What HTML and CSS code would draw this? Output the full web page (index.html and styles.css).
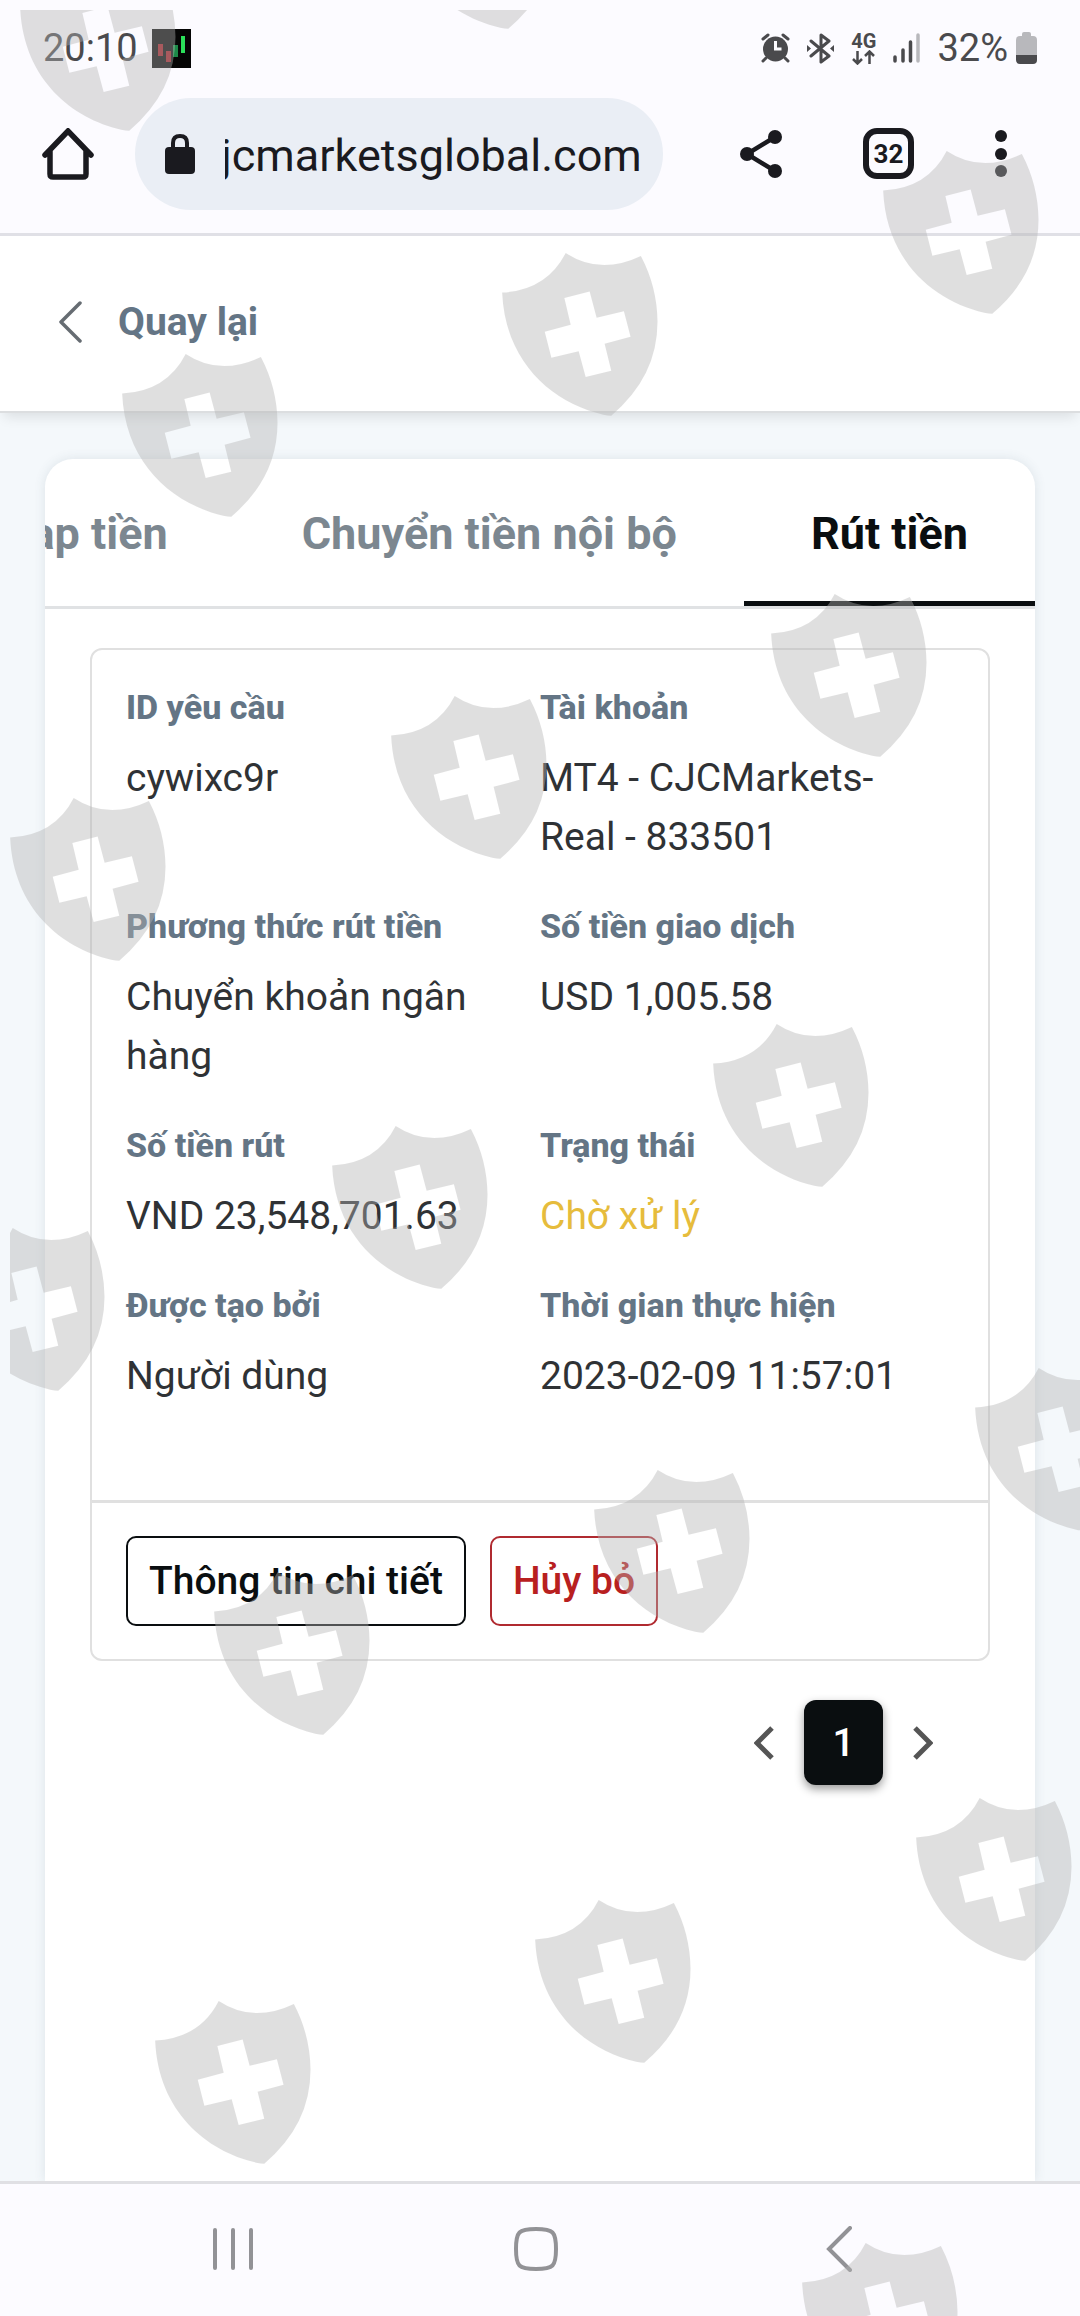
FILE: index.html
```html
<!DOCTYPE html>
<html lang="vi">
<head>
    <meta charset="UTF-8">
    <meta name="viewport" content="width=device-width, initial-scale=1.0">
    <title>Rút tiền</title>
    <link rel="stylesheet" href="styles.css">
</head>
<body>

    <div class="status-bar">
        <div class="status-left">
            <span>20:10</span>
            <svg width="39" height="39" viewBox="0 0 39 39">
                <rect width="39" height="39" fill="#050505"/>
                <path d="M6 15h5v12H6zM14 22h5v11h-5z" fill="#a01c22"/>
                <path d="M21 16h5v12h-5z" fill="#1c8a48"/>
                <path d="M29 7h4v17h-4z" fill="#2be05a"/>
            </svg>
        </div>
        <div class="status-right">
            <svg width="29" height="30" viewBox="0 0 29 30">
                <circle cx="14.500" cy="16" r="12.500" fill="#4a4a4d"/>
                <path d="M2 6l5-4M27 6l-5-4M5 25l-3 3M24 25l3 3" stroke="#4a4a4d" stroke-width="3" stroke-linecap="round"/>
                <path d="M14.500 8v8h6" fill="none" stroke="#fcfbff" stroke-width="3"/>
            </svg>
            <svg width="27" height="31" viewBox="0 0 27 31">
                <path d="M4 8l18 15-8 6V2l8 6L4 23" fill="none" stroke="#4a4a4d" stroke-width="3" stroke-linejoin="round" stroke-linecap="round"/>
                <path d="M0 12l4 3.500-4 3.500zM27 12l-4 3.500 4 3.500z" fill="#4a4a4d"/>
            </svg>
            <span class="network">
                4G
                <svg width="25" height="15" viewBox="0 0 25 15">
                    <path d="M6.500 1v12M2 9l4.500 4.500L11 9M18.500 14V2M14 6l4.500-4.500L23 6" fill="none" stroke="#4a4a4d" stroke-width="2.500"/>
                </svg>
            </span>
            <svg width="27" height="30" viewBox="0 0 27 30">
                <path d="M2 24v4M10 17v11M17.500 9v19" stroke="#4a4a4d" stroke-width="3.500" stroke-linecap="round"/>
                <path d="M25 2v26" stroke="#b8b8bc" stroke-width="3.500" stroke-linecap="round"/>
            </svg>
            <span class="battery">
                32%
                <svg width="21" height="32" viewBox="0 0 21 32">
                    <path d="M6 2q0-2 2-2h5q2 0 2 2v2h2q4 0 4 4v15H0V8q0-4 4-4h2z" fill="#b8b8bc"/>
                    <path d="M0 23h21v5q0 4-4 4H4q-4 0-4-4z" fill="#4a4a4d"/>
                </svg>
            </span>
        </div>
    </div>

    <div class="browser-bar">
        <button class="icon-btn" aria-label="Home">
            <svg width="52" height="52" viewBox="0 0 52 52">
                <path d="M3 27L26 3l23 24M8 22v24q0 3 3 3h30q3 0 3-3V22" fill="none" stroke="#1a1a1f" stroke-width="5.500" stroke-linecap="round"/>
            </svg>
        </button>
        <div class="address">
            <svg width="30" height="40" viewBox="0 0 30 40">
                <rect y="13" width="30" height="27" rx="4" fill="#1a1a1f"/>
                <path d="M8 14V9q0-7 7-7t7 7v5" fill="none" stroke="#1a1a1f" stroke-width="4"/>
            </svg>
            <input class="url" type="text" value="jcmarketsglobal.com" aria-label="URL">
        </div>
        <div class="browser-actions">
            <button class="icon-btn" aria-label="Share">
                <svg width="42" height="48" viewBox="0 0 42 48">
                    <path d="M35 7L7 24l28 17" fill="none" stroke="#1a1a1f" stroke-width="4.500"/>
                    <circle cx="35" cy="7" r="7" fill="#1a1a1f"/>
                    <circle cx="7" cy="24" r="7" fill="#1a1a1f"/>
                    <circle cx="35" cy="41" r="7" fill="#1a1a1f"/>
                </svg>
            </button>
            <button class="tab-count" aria-label="Tabs">32</button>
            <button class="icon-btn" aria-label="Menu">
                <svg width="12" height="48" viewBox="0 0 12 48">
                    <circle cx="6" cy="6" r="6" fill="#1a1a1f"/>
                    <circle cx="6" cy="24" r="6" fill="#1a1a1f"/>
                    <circle cx="6" cy="41" r="6" fill="#1a1a1f"/>
                </svg>
            </button>
        </div>
    </div>

    <header class="app-header">
        <a class="back" href="#">
            <svg width="24" height="44" viewBox="0 0 24 44">
                <path d="M22 3L3 22l19 19" fill="none" stroke="#666c72" stroke-width="3.500" stroke-linecap="round" stroke-linejoin="round"/>
            </svg>
            Quay lại
        </a>
    </header>

    <main class="page">
        <section class="panel">
            <nav class="tabs">
                <a class="tab" href="#">Nạp tiền</a>
                <a class="tab" href="#">Chuyển tiền nội bộ</a>
                <a class="tab active" href="#">Rút tiền</a>
            </nav>

            <article class="request">
                <dl class="fields">
                    <div class="field">
                        <dt>ID yêu cầu</dt>
                        <dd>cywixc9r</dd>
                    </div>
                    <div class="field">
                        <dt>Tài khoản</dt>
                        <dd>MT4 - CJCMarkets-Real - 833501</dd>
                    </div>
                    <div class="field">
                        <dt>Phương thức rút tiền</dt>
                        <dd>Chuyển khoản ngân hàng</dd>
                    </div>
                    <div class="field">
                        <dt>Số tiền giao dịch</dt>
                        <dd>USD 1,005.58</dd>
                    </div>
                    <div class="field">
                        <dt>Số tiền rút</dt>
                        <dd>VND 23,548,701.63</dd>
                    </div>
                    <div class="field">
                        <dt>Trạng thái</dt>
                        <dd class="pending">Chờ xử lý</dd>
                    </div>
                    <div class="field">
                        <dt>Được tạo bởi</dt>
                        <dd>Người dùng</dd>
                    </div>
                    <div class="field">
                        <dt>Thời gian thực hiện</dt>
                        <dd>2023-02-09 11:57:01</dd>
                    </div>
                </dl>
                <div class="request-actions">
                    <button class="btn">Thông tin chi tiết</button>
                    <button class="btn btn-danger">Hủy bỏ</button>
                </div>
            </article>

            <div class="pager">
                <button class="icon-btn" aria-label="Trang trước">
                    <svg width="20" height="34" viewBox="0 0 20 34">
                        <path d="M18 2L3 17l15 15" fill="none" stroke="#555" stroke-width="5"/>
                    </svg>
                </button>
                <button class="page-number">1</button>
                <button class="icon-btn" aria-label="Trang sau">
                    <svg width="20" height="34" viewBox="0 0 20 34">
                        <path d="M2 2l15 15L2 32" fill="none" stroke="#555" stroke-width="5"/>
                    </svg>
                </button>
            </div>
        </section>
    </main>

    <footer class="nav-bar">
        <button class="icon-btn" aria-label="Recents">
            <svg width="40" height="44" viewBox="0 0 40 44">
                <path d="M2 3v38M20 3v38M38 3v38" stroke="#929296" stroke-width="4" stroke-linecap="round"/>
            </svg>
        </button>
        <button class="icon-btn" aria-label="Home screen">
            <svg width="44" height="44" viewBox="0 0 44 44">
                <path d="M22 2q13 0 16.500 3.500T42 22t-3.500 16.500T22 42 5.500 38.500 2 22 5.500 5.500 22 2z" fill="none" stroke="#929296" stroke-width="4"/>
            </svg>
        </button>
        <button class="icon-btn" aria-label="Back">
            <svg width="26" height="46" viewBox="0 0 26 46">
                <path d="M24 2L3 23l21 21" fill="none" stroke="#929296" stroke-width="4" stroke-linecap="round"/>
            </svg>
        </button>
    </footer>

    <!-- shield watermark over the whole screen -->
    <svg class="watermark" aria-hidden="true">
        <defs>
            <symbol id="shield" viewBox="66 68 468 490">
                <path fill-rule="evenodd" d="M66 187Q200 180 257 68Q360 136 483 77Q532 170 533 275Q533 440 394 557Q384 557 370 554C220 520 75 400 66 187zM253 203L272 284 194 305 214 383 296 363 317 441 394 422 374 341 452 320 432 243 350 263 329 184z"/>
            </symbol>
        </defs>
        <use href="#shield" x="20" y="-32" width="156" height="163"/>
        <use href="#shield" x="399" y="-134" width="156" height="163"/>
        <use href="#shield" x="883" y="151" width="156" height="163"/>
        <use href="#shield" x="502" y="253" width="156" height="163"/>
        <use href="#shield" x="122" y="354" width="156" height="163"/>
        <use href="#shield" x="771" y="594" width="156" height="163"/>
        <use href="#shield" x="391" y="696" width="156" height="163"/>
        <use href="#shield" x="10" y="798" width="156" height="163"/>
        <use href="#shield" x="713" y="1024" width="156" height="163"/>
        <use href="#shield" x="332" y="1126" width="156" height="163"/>
        <use href="#shield" x="-51" y="1228" width="156" height="163"/>
        <use href="#shield" x="975" y="1368" width="156" height="163"/>
        <use href="#shield" x="594" y="1470" width="156" height="163"/>
        <use href="#shield" x="214" y="1572" width="156" height="163"/>
        <use href="#shield" x="916" y="1798" width="156" height="163"/>
        <use href="#shield" x="535" y="1900" width="156" height="163"/>
        <use href="#shield" x="155" y="2001" width="156" height="163"/>
        <use href="#shield" x="802" y="2243" width="156" height="163"/>
    </svg>

</body>
</html>
```

FILE: styles.css
```css
* {
    box-sizing: border-box;
}

body {
    position: relative;
    display: flex;
    flex-direction: column;
    min-height: 100vh;
    margin: 0;
    font-family: Roboto, sans-serif;
    font-size: 39px;
    color: #2f3235;
    background-color: #f4f8fb;
}

svg {
    display: block;
    flex-shrink: 0;
}

a {
    text-decoration: none;
}

button {
    font-family: inherit;
    cursor: pointer;
}

.icon-btn {
    padding: 0;
    border: none;
    background: none;
}

/* phone status bar */
.status-bar {
    display: flex;
    justify-content: space-between;
    align-items: center;
    height: 96px;
    padding: 0 43px;
    font-size: 38px;
    color: #4a4a4d;
    background-color: #fcfbff;
}

.status-left {
    display: flex;
    align-items: center;
    gap: 14px;
}

.status-right {
    display: flex;
    align-items: center;
    gap: 17px;
}

.network {
    display: flex;
    flex-direction: column;
    align-items: center;
    font-size: 20px;
    font-weight: 700;
    line-height: 18px;
}

.battery {
    display: flex;
    align-items: center;
    gap: 8px;
}

/* browser toolbar */
.browser-bar {
    display: flex;
    align-items: center;
    height: 140px;
    padding: 0 73px 22px 42px;
    background-color: #fcfbff;
    border-bottom: 3px solid #e0e0e6;
}

.address {
    display: flex;
    flex: 1;
    align-items: center;
    gap: 30px;
    min-width: 0;
    height: 112px;
    margin: 0 77px 0 41px;
    padding: 0 20px 0 30px;
    border-radius: 56px;
    background-color: #eaeef5;
}

.url {
    flex: 1;
    min-width: 0;
    padding: 4px 0 0;
    border: none;
    background: none;
    font-family: inherit;
    font-size: 45px;
    text-indent: -4px;
    color: #1a1a1f;
}

.browser-actions {
    display: flex;
    align-items: center;
    gap: 81px;
}

.tab-count {
    width: 51px;
    height: 51px;
    padding: 0;
    border: 6px solid #1a1a1f;
    border-radius: 14px;
    background: none;
    font-size: 26px;
    font-weight: 700;
    color: #1a1a1f;
}

/* app header */
.app-header {
    display: flex;
    align-items: center;
    height: 177px;
    padding: 0 58px 4px;
    background-color: #fff;
    border-bottom: 2px solid #dcdee0;
    box-shadow: 0 8px 12px -4px rgba(0, 0, 0, 0.1);
}

.back {
    display: flex;
    align-items: center;
    gap: 36px;
    font-weight: 700;
    color: #647585;
}

.page {
    display: flex;
    flex: 1;
    flex-direction: column;
    padding: 46px 45px 0;
}

.panel {
    flex: 1;
    border-radius: 28px 28px 0 0;
    background-color: #fff;
    box-shadow: 0 0 12px rgba(60, 80, 100, 0.12);
}

.tabs {
    display: flex;
    justify-content: flex-end;
    overflow: hidden;
    border-bottom: 3px solid #e0e2e4;
}

.tab {
    padding: 8px 67px 0;
    border-bottom: 5px solid transparent;
    font-size: 45px;
    font-weight: 700;
    line-height: 134px;
    white-space: nowrap;
    color: #7c8790;
}

.tab.active {
    color: #0a0e10;
    border-color: #0a0e10;
}

/* withdrawal request */
.request {
    margin: 39px 45px 0;
    border: 2px solid #e0e0e0;
    border-radius: 12px;
}

.fields {
    display: grid;
    grid-template-columns: 1fr 1fr;
    row-gap: 34px;
    margin: 0;
    padding: 32px 34px 94px;
    border-bottom: 3px solid #e0e0e0;
}

.field {
    padding-right: 24px;
}

.field dt {
    margin-bottom: 16px;
    font-size: 34px;
    font-weight: 800;
    line-height: 51px;
    color: #647585;
}

.field dd {
    margin: 0;
    font-size: 39px;
    line-height: 59px;
}

.field .pending {
    color: #e6bc3c;
}

.request-actions {
    display: flex;
    gap: 24px;
    padding: 33px 34px;
}

.btn {
    height: 90px;
    padding: 0 21px;
    border: 2px solid #0a0e10;
    border-radius: 10px;
    background: none;
    font-size: 39px;
    font-weight: 500;
    color: #0a0e10;
}

.btn-danger {
    border-color: #b02a30;
    color: #b8201f;
}

.pager {
    display: flex;
    justify-content: flex-end;
    align-items: center;
    gap: 30px;
    padding: 39px 102px;
}

.page-number {
    width: 79px;
    height: 85px;
    border: none;
    border-radius: 12px;
    background-color: #0a0e10;
    box-shadow: 0 4px 10px rgba(0, 0, 0, 0.4);
    font-size: 39px;
    font-weight: 500;
    color: #fff;
}

/* phone navigation */
.nav-bar {
    position: relative;
    display: grid;
    grid-template-columns: repeat(3, 1fr);
    place-items: center;
    height: 135px;
    padding: 0 90px 2px 82px;
    border-top: 3px solid #e0e0e4;
    background-color: #fcfbff;
}

.watermark {
    position: absolute;
    top: 0;
    left: 0;
    width: 100%;
    height: 100%;
    clip-path: inset(10px 0 0 10px);
    fill: #b4b4b4;
    opacity: 0.41;
    pointer-events: none;
}
```
